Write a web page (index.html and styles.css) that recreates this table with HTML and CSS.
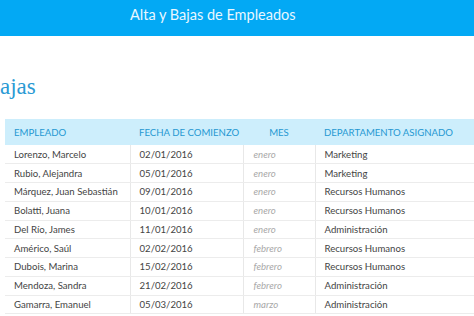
FILE: index.html
```html
<!DOCTYPE html>
<html lang="es">
<head>
<meta charset="utf-8">
<link rel="stylesheet" href="styles.css">
</head>
<body>
<header class="topbar"><h1 class="title">Alta y Bajas de Empleados</h1></header>
<h2 class="subtitle">ajas</h2>
<table class="grid">
  <thead>
    <tr><th class="c1">EMPLEADO</th><th class="c2">FECHA DE COMIENZO</th><th class="c3">MES</th><th class="c4">DEPARTAMENTO ASIGNADO</th></tr>
  </thead>
  <tbody>
    <tr><td>Lorenzo, Marcelo</td><td>02/01/2016</td><td class="mes">enero</td><td>Marketing</td></tr>
    <tr><td>Rubio, Alejandra</td><td>05/01/2016</td><td class="mes">enero</td><td>Marketing</td></tr>
    <tr><td>Márquez, Juan Sebastián</td><td>09/01/2016</td><td class="mes">enero</td><td>Recursos Humanos</td></tr>
    <tr><td>Bolatti, Juana</td><td>10/01/2016</td><td class="mes">enero</td><td>Recursos Humanos</td></tr>
    <tr><td>Del Río, James</td><td>11/01/2016</td><td class="mes">enero</td><td>Administración</td></tr>
    <tr><td>Américo, Saúl</td><td>02/02/2016</td><td class="mes">febrero</td><td>Recursos Humanos</td></tr>
    <tr><td>Dubois, Marina</td><td>15/02/2016</td><td class="mes">febrero</td><td>Recursos Humanos</td></tr>
    <tr><td>Mendoza, Sandra</td><td>21/02/2016</td><td class="mes">febrero</td><td>Administración</td></tr>
    <tr><td>Gamarra, Emanuel</td><td>05/03/2016</td><td class="mes">marzo</td><td>Administración</td></tr>
  </tbody>
</table>
</body>
</html>
```
FILE: styles.css
```css
html, body { margin: 0; padding: 0; background: #fff; overflow: hidden; }
body { width: 474px; height: 316px; font-family: Lato, "Noto Sans", sans-serif; }
.topbar { height: 36px; background: #03a9f4; box-sizing: border-box; padding-left: 130px; display: flex; align-items: flex-start; }
.title { margin: 4px 0 0 0; font-weight: 400; font-size: 14.5px; line-height: 22px; color: #e8f7ff; }
.subtitle { margin: 39px 0 0 0; height: 44px; font-family: "Liberation Serif", serif; font-weight: 400; font-size: 23px; line-height: 24px; color: #2a9ad4; }
.grid { margin-left: 5px; border-collapse: collapse; table-layout: fixed; width: 469px; font-size: 9.6px; color: #444; }
.grid th { background: #cdeefc; height: 26px; padding: 0 0 0 9px; font-weight: 400; color: #2598d2; text-align: left; font-size: 9.6px; white-space: nowrap; }
.grid th.c3 { text-align: center; padding-left: 0; }
.c1 { width: 116px; }
.c2 { width: 104px; }
.c3 { width: 72px; }
.c4 { width: 150px; }
.grid td { height: 18.75px; padding: 0 0 0 9px; border-bottom: 1px solid #ececec; border-right: 1px solid #e8e8e8; box-sizing: border-box; white-space: nowrap; }
.grid td:last-child { border-right: 0; }
.grid td.mes { font-style: italic; color: #a8a8a8; padding-left: 10px; }
```
